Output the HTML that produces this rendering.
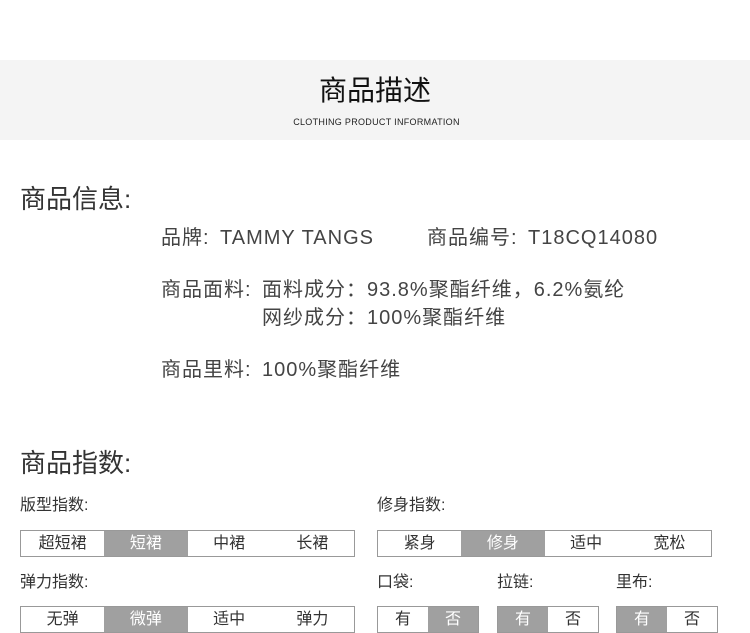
<!DOCTYPE html>
<html><head><meta charset="utf-8"><style>
body{margin:0;width:750px;height:633px;background:#fff;position:relative;overflow:hidden;font-family:"Liberation Sans","Noto Sans CJK SC",sans-serif;color:#333}
.a{position:absolute;white-space:nowrap;line-height:1}
.band{position:absolute;left:0;top:60px;width:750px;height:80px;background:#f4f4f4}
.box{position:absolute;border:1px solid #999;display:flex;box-sizing:border-box;height:27px}
.box div{flex:1;text-align:center;font-size:16px;line-height:25px;color:#333}
.box div.on{background:#a0a0a0;color:#fff}
.t{font-size:20px;color:#444;letter-spacing:1px}
.l{font-size:16px;color:#333}
</style></head><body>
<div class="band"></div>
<div class="a" style="left:0;width:750px;text-align:center;top:77px;font-size:28px;color:#111">商品描述</div>
<div class="a" style="left:0;width:753px;text-align:center;top:118px;font-size:9px;color:#222;letter-spacing:0.3px">CLOTHING PRODUCT INFORMATION</div>

<div class="a" style="left:20px;top:186px;font-size:26px;color:#333">商品信息:</div>
<div class="a t" style="left:161px;top:228px">品牌:</div>
<div class="a t" style="left:220px;top:228px">TAMMY TANGS</div>
<div class="a t" style="left:427px;top:228px">商品编号:</div>
<div class="a t" style="left:528px;top:228px">T18CQ14080</div>
<div class="a t" style="left:161px;top:280px">商品面料:</div>
<div class="a t" style="left:262px;top:280px">面料成分：93.8%聚酯纤维，6.2%氨纶</div>
<div class="a t" style="left:262px;top:308px">网纱成分：100%聚酯纤维</div>
<div class="a t" style="left:161px;top:360px">商品里料:</div>
<div class="a t" style="left:262px;top:360px">100%聚酯纤维</div>

<div class="a" style="left:20px;top:450px;font-size:26px;color:#333">商品指数:</div>
<div class="a l" style="left:20px;top:498px">版型指数:</div>
<div class="a l" style="left:377px;top:498px">修身指数:</div>
<div class="box" style="left:20px;top:530px;width:335px"><div>超短裙</div><div class="on">短裙</div><div>中裙</div><div>长裙</div></div>
<div class="box" style="left:377px;top:530px;width:335px"><div>紧身</div><div class="on">修身</div><div>适中</div><div>宽松</div></div>
<div class="a l" style="left:20px;top:575px">弹力指数:</div>
<div class="a l" style="left:377px;top:575px">口袋:</div>
<div class="a l" style="left:497px;top:575px">拉链:</div>
<div class="a l" style="left:616px;top:575px">里布:</div>
<div class="box" style="left:20px;top:606px;width:335px"><div>无弹</div><div class="on">微弹</div><div>适中</div><div>弹力</div></div>
<div class="box" style="left:377px;top:606px;width:102px"><div>有</div><div class="on">否</div></div>
<div class="box" style="left:497px;top:606px;width:102px"><div class="on">有</div><div>否</div></div>
<div class="box" style="left:616px;top:606px;width:102px"><div class="on">有</div><div>否</div></div>
</body></html>
